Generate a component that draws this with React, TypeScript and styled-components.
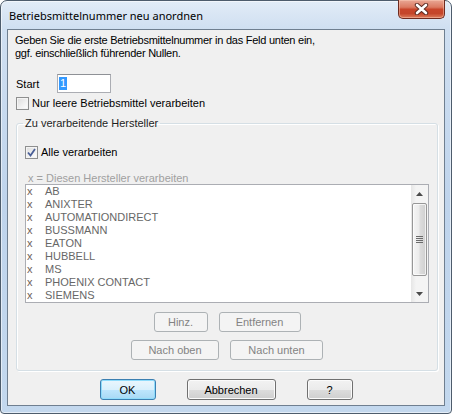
import React from 'react'
import styled, { createGlobalStyle } from 'styled-components'

const GlobalStyle = createGlobalStyle`
  html, body {
    margin: 0;
    padding: 0;
    background: #ffffff;
  }
  body {
    font-family: 'Liberation Sans', Arial, sans-serif;
    font-size: 11px;
    color: #000;
  }
`

const manufacturers = [
  'AB',
  'ANIXTER',
  'AUTOMATIONDIRECT',
  'BUSSMANN',
  'EATON',
  'HUBBELL',
  'MS',
  'PHOENIX CONTACT',
  'SIEMENS'
]

const Window = styled.div`
  width: 452px;
  height: 414px;
  box-sizing: border-box;
  border: 1px solid #4d5c6c;
  border-radius: 7px 7px 4px 4px;
  background: linear-gradient(180deg, #e2ecf7 0px, #cfdff1 28px, #bfd4ec 200px, #c3d8ee 100%);
  box-shadow: inset 0 0 0 1px rgba(255, 255, 255, 0.55);
  padding: 0 6px 7px 6px;
  display: flex;
  flex-direction: column;
`

const TitleBar = styled.div`
  height: 28px;
  display: flex;
  justify-content: space-between;
  align-items: flex-start;
`

const Title = styled.div`
  font-family: 'Noto Sans', 'Open Sans', sans-serif;
  font-size: 11px;
  line-height: 15px;
  padding: 7px 0 0 2px;
  color: #000;
`

const CloseButton = styled.div`
  width: 47px;
  height: 19px;
  box-sizing: border-box;
  margin-top: -1px;
  border: 1px solid #6e2a1f;
  border-top: none;
  border-radius: 0 0 5px 5px;
  background: linear-gradient(180deg, #e9a795 0%, #db7a62 40%, #c8452b 52%, #c4452a 75%, #dc7c5c 100%);
  box-shadow: inset 0 0 0 1px rgba(255, 210, 190, 0.45);
  display: flex;
  align-items: center;
  justify-content: center;
`

const Client = styled.div`
  flex: 1;
  border: 1px solid #6f7f90;
  background: #f0f0f0;
  padding: 4px 6px 0 8px;
  display: flex;
  flex-direction: column;
`

const Intro = styled.p`
  margin: 0 0 0 -1px;
  line-height: 13px;
  letter-spacing: -0.25px;
`

const StartRow = styled.div`
  margin-top: 14px;
  display: flex;
  align-items: center;
  height: 19px;
`

const StartLabel = styled.span`
  width: 41px;
  padding-top: 1px;
`

const TextBox = styled.div`
  width: 54px;
  height: 19px;
  box-sizing: border-box;
  border: 1px solid #abadb3;
  border-top-color: #8e9196;
  background: #fff;
  padding: 2px 0 0 1px;
`

const Selected = styled.span`
  display: inline-block;
  background: #3399ff;
  color: #fff;
  line-height: 13px;
  padding: 0 1px;
`

const CheckRow = styled.label<{ $top: number }>`
  margin-top: ${(p) => p.$top}px;
  display: flex;
  align-items: center;
  gap: 3px;
  height: 13px;
  line-height: 13px;
`

const Box = styled.span`
  width: 13px;
  height: 13px;
  box-sizing: border-box;
  border: 1px solid #8e8f8f;
  background: linear-gradient(135deg, #dcdcdc 0%, #f2f2f2 60%, #ffffff 100%);
  box-shadow: inset 0 0 0 1px #f4f4f4;
  display: flex;
  align-items: center;
  justify-content: center;
`

const Group = styled.fieldset`
  margin: 7px 0 0 0;
  width: 422px;
  box-sizing: border-box;
  border: 1px solid #d5dfe5;
  border-radius: 3px;
  box-shadow: inset 1px 1px 0 #ffffff, 1px 1px 0 #ffffff;
  padding: 0 8px 10px 8px;
  display: flex;
  flex-direction: column;
  min-width: 0;
`

const Legend = styled.legend`
  padding: 0 2px;
  margin-left: -2px;
  line-height: 13px;
  color: #1e1e1e;
`

const Caption = styled.div`
  margin-top: 13px;
  margin-left: 3px;
  line-height: 12px;
  color: #a0a0a0;
`

const ListBox = styled.div`
  height: 119px;
  box-sizing: border-box;
  border: 1px solid #abadb3;
  background: #fff;
  display: flex;
`

const Items = styled.div`
  flex: 1;
  padding-left: 1px;
`

const Item = styled.div`
  display: grid;
  grid-template-columns: 18px 1fr;
  height: 13px;
  line-height: 13px;
  color: #676767;
`

const Mark = styled.span`
  color: #6e6158;
`

const ScrollBar = styled.div`
  width: 17px;
  display: flex;
  flex-direction: column;
  background: linear-gradient(90deg, #e6e6e6 0%, #f4f4f4 30%, #f4f4f4 100%);
`

const Arrow = styled.div`
  height: 17px;
  display: flex;
  align-items: center;
  justify-content: center;
`

const Track = styled.div`
  flex: 1;
  padding: 1px 1px 0 1px;
`

const Thumb = styled.div`
  height: 73px;
  box-sizing: border-box;
  border: 1px solid #979797;
  border-radius: 2px;
  background: linear-gradient(90deg, #f5f5f5 0%, #ececec 45%, #dcdcdc 55%, #cfcfcf 100%);
  box-shadow: inset 0 0 0 1px rgba(255, 255, 255, 0.7);
  display: flex;
  align-items: center;
  justify-content: center;
`

const ButtonRow = styled.div<{ $top: number; $gap: number }>`
  margin-top: ${(p) => p.$top}px;
  display: flex;
  justify-content: center;
  gap: ${(p) => p.$gap}px;
`

const Button = styled.button<{ $w: number; $h?: number; $default?: boolean }>`
  width: ${(p) => p.$w}px;
  height: ${(p) => p.$h ?? 21}px;
  box-sizing: border-box;
  padding: 0;
  font-family: 'Liberation Sans', Arial, sans-serif;
  font-size: 11px;
  color: #000;
  border-radius: 3px;
  border: 1px solid ${(p) => (p.$default ? '#3c7fb1' : '#707070')};
  background: ${(p) =>
    p.$default
      ? 'linear-gradient(180deg, #eaf6fd 0%, #d9f0fc 50%, #bee6fd 51%, #a7d9f5 100%)'
      : 'linear-gradient(180deg, #f2f2f2 0%, #ebebeb 50%, #dddddd 51%, #cfcfcf 100%)'};
  box-shadow: inset 0 0 0 1px ${(p) => (p.$default ? '#8fdcfb' : '#fbfbfb')};

  &:disabled {
    border-color: #adb2b5;
    background: #f4f4f4;
    box-shadow: none;
    color: #838383;
  }
`

const Footer = styled.div`
  margin-top: 8px;
  margin-left: -8px;
  margin-right: -6px;
  display: flex;
  justify-content: center;
  gap: 31px;
`

const CheckBox = ({ checked }: { checked?: boolean }) => (
  <Box>
    {checked && (
      <svg width='9' height='9' viewBox='0 0 9 9'>
        <path d='M1 4.5 L3.5 7.5 L8 1' fill='none' stroke='#4a5f97' strokeWidth='1.8' />
      </svg>
    )}
  </Box>
)

const Tri = ({ down }: { down?: boolean }) => (
  <svg width='7' height='4' viewBox='0 0 7 4'>
    <path d={down ? 'M0 0 H7 L3.5 4 Z' : 'M0 4 H7 L3.5 0 Z'} fill='#4b4b4b' />
  </svg>
)

export default function App() {
  return (
    <>
      <GlobalStyle />
      <Window>
        <TitleBar>
          <Title>Betriebsmittelnummer neu anordnen</Title>
          <CloseButton>
            <svg width='15' height='12' viewBox='0 0 15 12'>
              <path d='M3 2 L12 10 M12 2 L3 10' stroke='#5a2a22' strokeWidth='4.4' strokeLinecap='round' />
              <path d='M3 2 L12 10 M12 2 L3 10' stroke='#ffffff' strokeWidth='2.6' strokeLinecap='round' />
            </svg>
          </CloseButton>
        </TitleBar>
        <Client>
          <Intro>
            Geben Sie die erste Betriebsmittelnummer in das Feld unten ein,
            <br />
            ggf. einschließlich führender Nullen.
          </Intro>
          <StartRow>
            <StartLabel>Start</StartLabel>
            <TextBox>
              <Selected>1</Selected>
            </TextBox>
          </StartRow>
          <CheckRow $top={4}>
            <CheckBox />
            <span>Nur leere Betriebsmittel verarbeiten</span>
          </CheckRow>
          <Group>
            <Legend>Zu verarbeitende Hersteller</Legend>
            <CheckRow $top={16}>
              <CheckBox checked />
              <span>Alle verarbeiten</span>
            </CheckRow>
            <Caption>x = Diesen Hersteller verarbeiten</Caption>
            <ListBox>
              <Items>
                {manufacturers.map((name) => (
                  <Item key={name}>
                    <Mark>x</Mark>
                    <span>{name}</span>
                  </Item>
                ))}
              </Items>
              <ScrollBar>
                <Arrow>
                  <Tri />
                </Arrow>
                <Track>
                  <Thumb>
                    <svg width='7' height='7' viewBox='0 0 7 7'>
                      <path d='M0 0.5 H7 M0 2.5 H7 M0 4.5 H7 M0 6.5 H7' stroke='#6b6b6b' strokeWidth='1' />
                    </svg>
                  </Thumb>
                </Track>
                <Arrow>
                  <Tri down />
                </Arrow>
              </ScrollBar>
            </ListBox>
            <ButtonRow $top={9} $gap={11}>
              <Button $w={54} $h={20} disabled>
                Hinz.
              </Button>
              <Button $w={82} $h={20} disabled>
                Entfernen
              </Button>
            </ButtonRow>
            <ButtonRow $top={8} $gap={11}>
              <Button $w={88} $h={20} disabled>
                Nach oben
              </Button>
              <Button $w={93} $h={20} disabled>
                Nach unten
              </Button>
            </ButtonRow>
          </Group>
          <Footer>
            <Button $w={56} $default>
              OK
            </Button>
            <Button $w={89}>Abbrechen</Button>
            <Button $w={46}>?</Button>
          </Footer>
        </Client>
      </Window>
    </>
  )
}
